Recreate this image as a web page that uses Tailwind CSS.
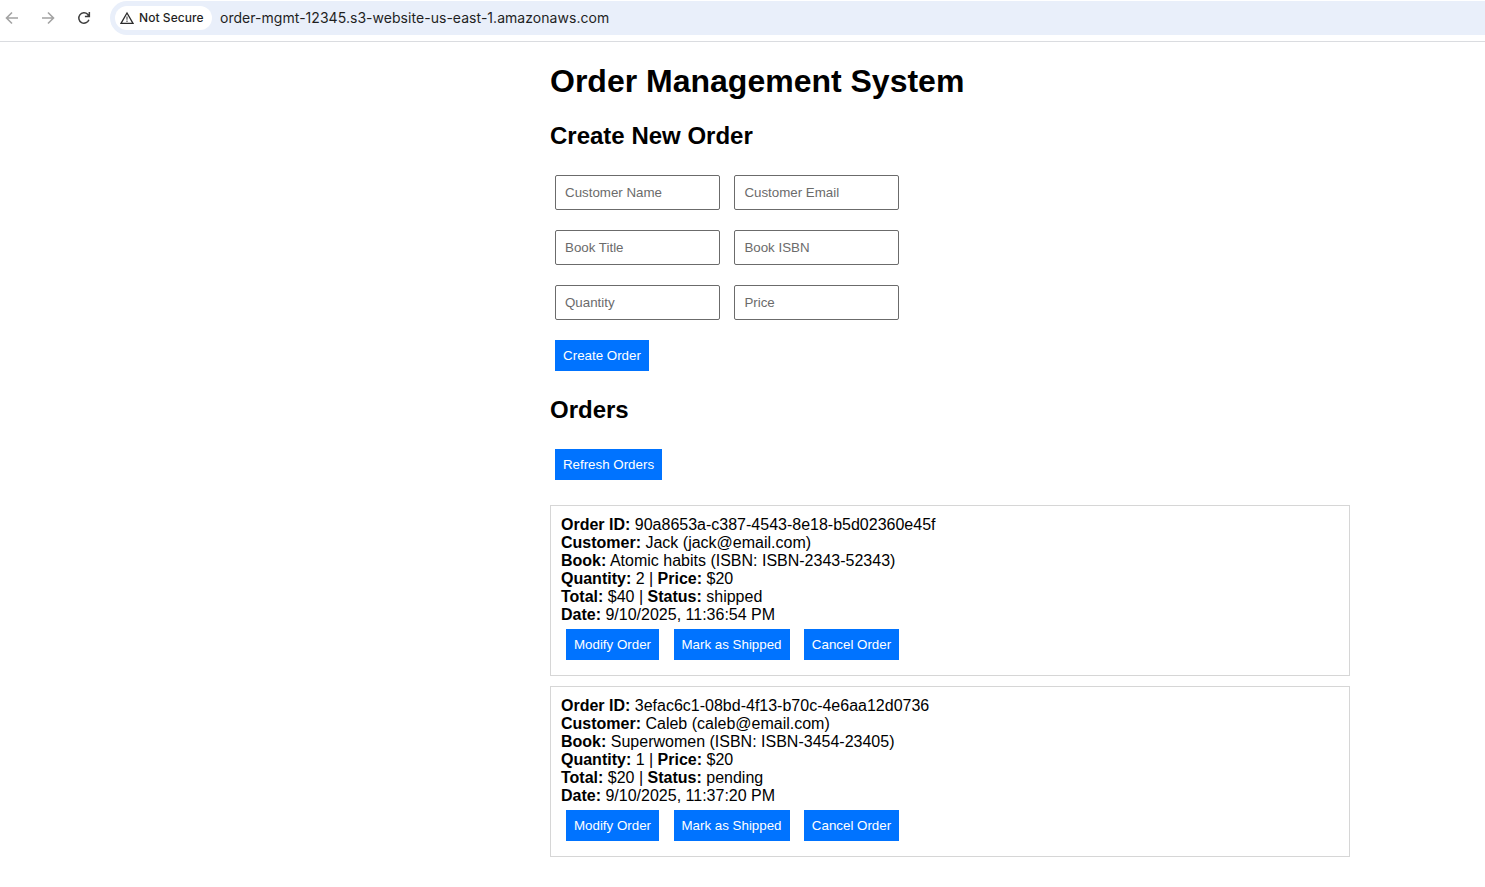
<!DOCTYPE html>
<html lang="en">
<head>
<meta charset="utf-8">
<title>Order Management System</title>
<script src="https://cdn.jsdelivr.net/npm/@tailwindcss/browser@4"></script>
</head>
<body class="h-[887px] overflow-hidden bg-white font-['Liberation_Sans',Arial,sans-serif] text-black">
<header class="flex h-[42px] items-start border-b border-[#dadce0] pt-px font-[Inter,sans-serif]">
  <nav class="flex h-[34px] w-[110px] shrink-0 items-center">
    <svg class="ml-1 h-4 w-4 shrink-0" viewBox="0 0 16 16" fill="none" stroke="#a3a3a3" stroke-width="1.6"><path d="M14 8H3M8 2.500 2.500 8 8 13.500"/></svg>
    <svg class="ml-5 h-4 w-4 shrink-0" viewBox="0 0 16 16" fill="none" stroke="#a3a3a3" stroke-width="1.6"><path d="M2 8h11M8 2.500 13.500 8 8 13.500"/></svg>
    <svg class="ml-5 h-4 w-4 shrink-0" viewBox="0 0 16 16"><path d="M12.900 9.700A5.200 5.200 0 1 1 11.700 4.300L13 5.600" fill="none" stroke="#3c3c3c" stroke-width="1.5"/><path d="M14.100 2v5.200H8.900V5.700h2.200l1.500-1.500V2Z" fill="#3c3c3c"/></svg>
  </nav>
  <div class="flex h-[34px] flex-1 items-center rounded-l-full bg-[#e9effa] pl-[5px] text-[#1f1f1f]">
    <div class="flex h-6 w-[97px] shrink-0 items-center rounded-full bg-white pl-[5px]">
      <svg class="h-[14px] w-[14px] shrink-0" viewBox="0 0 14 14"><path d="M7 2 13 12.300H1Z" fill="none" stroke="#2b2b2b" stroke-width="1.300"/><path d="M7 5.400v3.300M7 9.600v1.300" stroke="#555" stroke-width="1.200"/></svg>
      <span class="ml-[5px] whitespace-nowrap text-[12px] font-medium leading-4 tracking-[0.06px]">Not Secure</span>
    </div>
    <span class="ml-2 whitespace-nowrap text-[14px] leading-5 tracking-[0.04px]">order-mgmt-12345.s3-website-us-east-1.amazonaws.com</span>
  </div>
</header>
<main class="ml-[550px] w-[800px] pt-[21px]">
  <h1 class="text-[32px] font-bold leading-[36px]">Order Management System</h1>
  <h2 class="mt-[23px] text-2xl font-bold leading-[27px]">Create New Order</h2>
  <form class="mt-[26px] ml-[5px]">
    <div class="grid w-[344px] grid-cols-[165px_165px] gap-x-[14px] gap-y-5 text-[13.333px]">
      <input class="h-[35px] rounded-[2px] border border-[#6b6b6b] px-[9px] placeholder:text-[#6b6b6b]" placeholder="Customer Name">
      <input class="h-[35px] rounded-[2px] border border-[#6b6b6b] px-[9.4px] placeholder:text-[#6b6b6b]" placeholder="Customer Email">
      <input class="h-[35px] rounded-[2px] border border-[#6b6b6b] px-[9px] placeholder:text-[#6b6b6b]" placeholder="Book Title">
      <input class="h-[35px] rounded-[2px] border border-[#6b6b6b] px-[9.4px] placeholder:text-[#6b6b6b]" placeholder="Book ISBN">
      <input class="h-[35px] rounded-[2px] border border-[#6b6b6b] px-[9px] placeholder:text-[#6b6b6b]" placeholder="Quantity">
      <input class="h-[35px] rounded-[2px] border border-[#6b6b6b] px-[9.4px] placeholder:text-[#6b6b6b]" placeholder="Price">
    </div>
    <button type="button" class="mt-5 block h-[31px] w-[94px] whitespace-nowrap bg-[#0073ff] text-[13.333px] text-white">Create Order</button>
  </form>
  <h2 class="mt-[25px] text-2xl font-bold leading-[27px]">Orders</h2>
  <button class="mt-[26px] ml-[5px] block h-[31px] w-[107px] whitespace-nowrap bg-[#0073ff] text-[13.333px] text-white">Refresh Orders</button>
  <section class="mt-[25px] flex flex-col gap-[10px] text-base leading-[18px]">
    <article class="h-[171px] border border-[#d6d6d6] p-[10px]">
      <p><b>Order ID:</b> 90a8653a-c387-4543-8e18-b5d02360e45f</p>
      <p><b>Customer:</b> Jack (jack@email.com)</p>
      <p><b>Book:</b> Atomic habits (ISBN: ISBN-2343-52343)</p>
      <p><b>Quantity:</b> 2 | <b>Price:</b> $20</p>
      <p><b>Total:</b> $40 | <b>Status:</b> shipped</p>
      <p><b>Date:</b> 9/10/2025, 11:36:54 PM</p>
      <div class="mt-[5px] ml-[5px] flex text-[13.333px] text-white">
        <button class="h-[31px] w-[93px] whitespace-nowrap bg-[#0073ff]">Modify Order</button>
        <button class="ml-[15px] h-[31px] w-[116px] whitespace-nowrap bg-[#0073ff] pr-px">Mark as Shipped</button>
        <button class="ml-[14px] h-[31px] w-[95px] whitespace-nowrap bg-[#0073ff]">Cancel Order</button>
      </div>
    </article>
    <article class="h-[171px] border border-[#d6d6d6] p-[10px]">
      <p><b>Order ID:</b> 3efac6c1-08bd-4f13-b70c-4e6aa12d0736</p>
      <p><b>Customer:</b> Caleb (caleb@email.com)</p>
      <p><b>Book:</b> Superwomen (ISBN: ISBN-3454-23405)</p>
      <p><b>Quantity:</b> 1 | <b>Price:</b> $20</p>
      <p><b>Total:</b> $20 | <b>Status:</b> pending</p>
      <p><b>Date:</b> 9/10/2025, 11:37:20 PM</p>
      <div class="mt-[5px] ml-[5px] flex text-[13.333px] text-white">
        <button class="h-[31px] w-[93px] whitespace-nowrap bg-[#0073ff]">Modify Order</button>
        <button class="ml-[15px] h-[31px] w-[116px] whitespace-nowrap bg-[#0073ff] pr-px">Mark as Shipped</button>
        <button class="ml-[14px] h-[31px] w-[95px] whitespace-nowrap bg-[#0073ff]">Cancel Order</button>
      </div>
    </article>
  </section>
</main>
</body>
</html>
